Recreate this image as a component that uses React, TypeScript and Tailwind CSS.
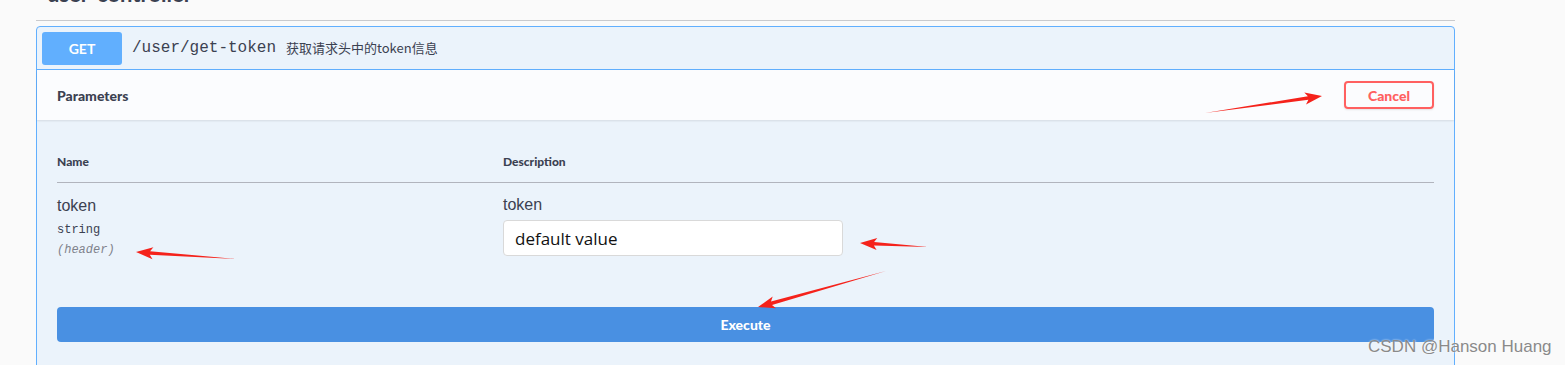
import React from "react";

type Arrow = { from: [number, number]; to: [number, number] };

// red annotation arrows drawn over the screenshot
const arrows: Arrow[] = [
  { from: [1205, 113], to: [1322, 96] },
  { from: [236, 259], to: [136, 252] },
  { from: [928, 247], to: [860, 243] },
  { from: [886, 271], to: [758, 307] },
];

function arrowPoints({ from, to }: Arrow) {
  const [x1, y1] = from;
  const [x2, y2] = to;
  const dx = x2 - x1;
  const dy = y2 - y1;
  const len = Math.hypot(dx, dy);
  const ux = dx / len;
  const uy = dy / len;
  const nx = -uy;
  const ny = ux;
  const headLen = 14;
  const headW = 6;
  const bx = x2 - ux * headLen;
  const by = y2 - uy * headLen;
  const shaft = 1.8;
  const pts = [
    [x1, y1],
    [bx + nx * shaft, by + ny * shaft],
    [bx + nx * headW - ux * 3, by + ny * headW - uy * 3],
    [x2, y2],
    [bx - nx * headW - ux * 3, by - ny * headW - uy * 3],
    [bx - nx * shaft, by - ny * shaft],
  ];
  return pts.map((p) => `${p[0].toFixed(1)},${p[1].toFixed(1)}`).join(" ");
}

export default function App() {
  return (
    <div className="relative w-[1565px] h-[365px] overflow-hidden bg-[#fafafa] font-['Liberation_Sans',sans-serif]">
      <div className="ml-[36px] w-[1419px]">
        {/* Section title (cut off at top) */}
        <div className="h-[21px] overflow-hidden flex items-end border-b border-[#c9cacd]">
          <span className="ml-[11px] mb-[15px] leading-none text-[22px] font-bold text-[#3b4151] font-['Lato',sans-serif]">
            user-controller
          </span>
        </div>

        {/* Operation block */}
        <div className="mt-[5px] h-[360px] rounded-t-[4px] border border-[#61affe] bg-[#ebf3fb]">
          <div className="flex items-center h-[43px] border-b border-[#61affe] px-[5px]">
            <div className="flex items-center justify-center w-[80px] h-[33px] rounded-[3px] bg-[#61affe] text-white text-[14px] font-bold font-['Lato',sans-serif]">
              GET
            </div>
            <span className="ml-[10px] text-[16px] text-[#3b4151] font-['Liberation_Mono',monospace]">
              /user/get-token
            </span>
            <span className="ml-[10px] text-[13px] text-[#3b4151] font-['Noto_Sans_CJK_SC',sans-serif]">
              获取请求头中的token信息
            </span>
          </div>

          {/* Parameters header */}
          <div className="flex items-center justify-between h-[50px] px-[20px] bg-[#fbfcfe] shadow-[0_1px_2px_rgba(0,0,0,0.1)]">
            <span className="text-[14px] font-black text-[#3b4151] font-['Lato',sans-serif]">Parameters</span>
            <button className="w-[90px] h-[28px] rounded-[4px] border-2 border-[#ff6060] text-[#ff6060] text-[14px] font-black font-['Lato',sans-serif] shadow-[0_1px_2px_rgba(0,0,0,0.1)]">
              Cancel
            </button>
          </div>

          <div className="px-[20px] pt-[21px]">
            {/* table header */}
            <div className="flex h-[42px] items-center border-b border-[#b1b4bd] text-[12px] font-black text-[#3b4151] font-['Lato',sans-serif]">
              <span className="w-[446px]">Name</span>
              <span>Description</span>
            </div>
            {/* row */}
            <div className="flex pt-[12px]">
              <div className="w-[446px] flex flex-col">
                <span className="text-[16px] leading-[22px] text-[#3b4151]">token</span>
                <span className="mt-[5px] text-[12px] leading-[16px] text-[#3b4151] font-['Liberation_Mono',monospace]">
                  string
                </span>
                <span className="mt-[4px] text-[12px] leading-[16px] italic text-[#7f828c] font-['Liberation_Mono',monospace]">
                  (header)
                </span>
              </div>
              <div className="flex flex-col">
                <span className="text-[16px] leading-[20px] text-[#3b4151]">token</span>
                <input
                  readOnly
                  value="default value"
                  className="mt-[5px] w-[340px] h-[36px] rounded-[4px] border border-[#d9d9d9] bg-white px-[11px] text-[17px] text-[#111] outline-none font-['Open_Sans',sans-serif]"
                />
              </div>
            </div>
            <button className="mt-[49px] w-full h-[35px] rounded-[4px] bg-[#4990e2] text-white text-[14px] font-black font-['Lato',sans-serif]">
              Execute
            </button>
          </div>
        </div>
      </div>

      {/* annotation arrows */}
      <svg className="absolute inset-0 pointer-events-none" width="1565" height="365">
        {arrows.map((a, i) => (
          <polygon key={i} points={arrowPoints(a)} fill="#f5221b" />
        ))}
      </svg>

      {/* watermark */}
      <span className="absolute left-[1368px] top-[334px] text-[17px] text-[#8a8a8a] [text-shadow:0_0_2px_#fff] font-['Liberation_Sans',sans-serif]">
        CSDN @Hanson Huang
      </span>
    </div>
  );
}
